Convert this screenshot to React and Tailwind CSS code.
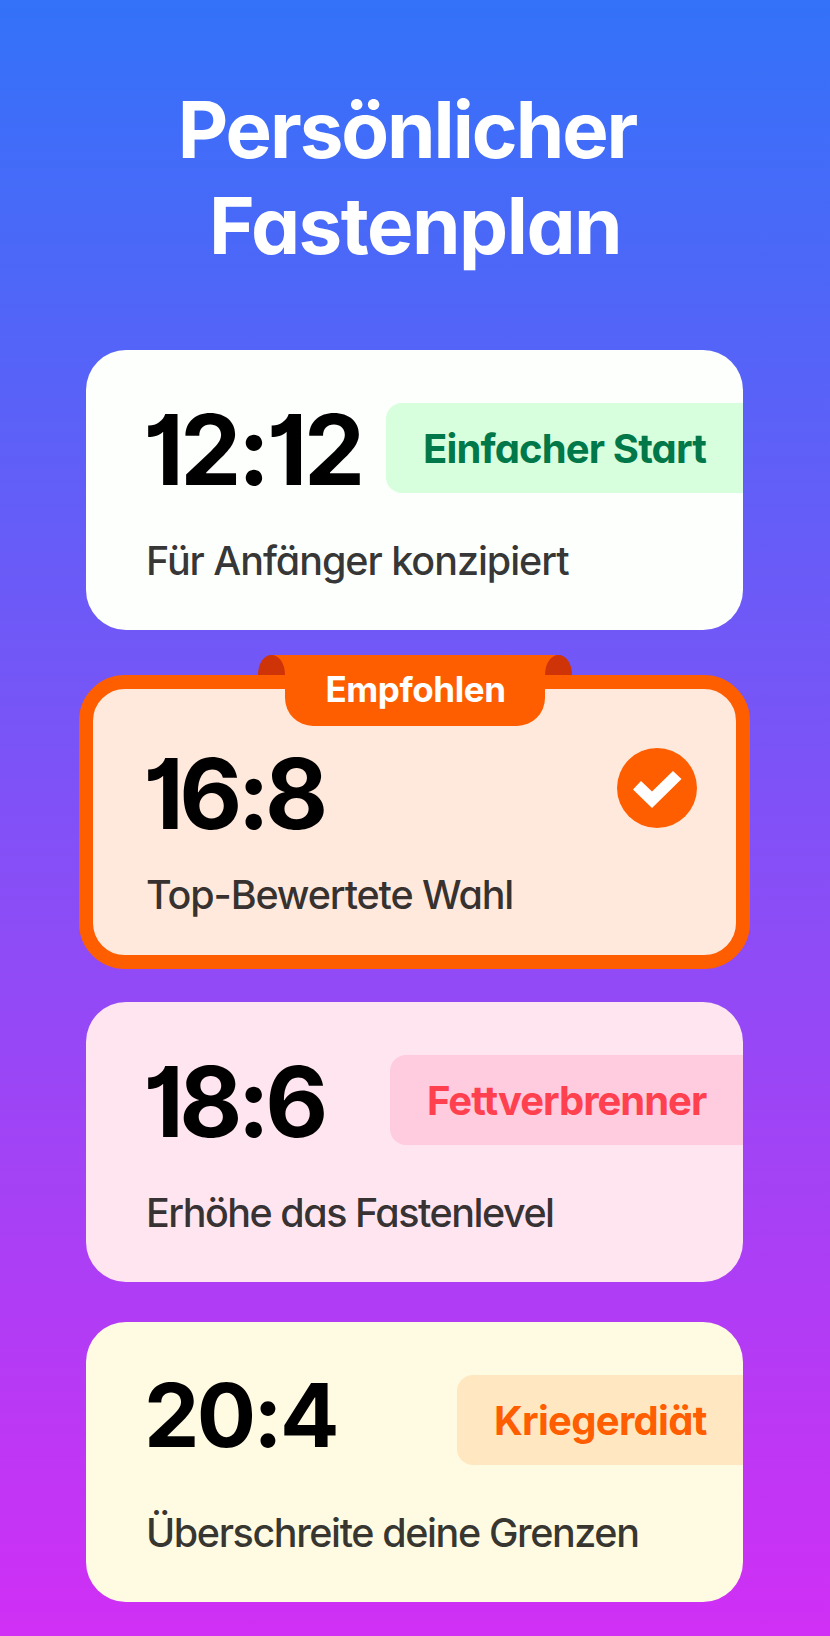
const features = "[font-feature-settings:'cv01','cv11','calt'_0]";

function Badge({ children, className }) {
  return (
    <span className={`mt-[3px] flex h-[90px] shrink-0 items-center rounded-l-2xl pt-[2px] pl-[37px] text-[40px] leading-[88px] font-bold ${className}`}>
      {children}
    </span>
  );
}

function PlanCard({ hours, hoursClass, description, descriptionClass, badge, badgeClass, className }) {
  return (
    <article className={`h-[280px] overflow-hidden rounded-[40px] pt-[50px] pl-[60px] ${className}`}>
      <div className="flex h-[100px] items-start justify-between">
        <span className={`font-bold text-black ${hoursClass}`}>{hours}</span>
        <Badge className={badgeClass}>{badge}</Badge>
      </div>
      <p className={`mt-[36px] text-[39.5px] leading-[50px] font-medium text-black/80 ${descriptionClass}`}>{description}</p>
    </article>
  );
}

function Ribbon() {
  return (
    <div className="absolute top-[-34px] left-1/2 flex -translate-x-1/2 items-start">
      <svg className="-mr-px h-[20px] w-[28px]" viewBox="0 0 28 20">
        <path d="M13.5 0H28V20H13.5Z" fill="#ff5e00" />
        <path d="M0 20C0 8 6 0 13.5 0S27 8 27 20Z" fill="#cf3308" />
      </svg>
      <span className="h-[71px] w-[260px] rounded-b-[28px] bg-[#ff5e00] pl-[2px] text-center text-[35px] leading-[69px] font-bold tracking-[-0.4px] text-white">
        Empfohlen
      </span>
      <svg className="-ml-px h-[20px] w-[28px]" viewBox="0 0 28 20">
        <path d="M0 0H14.5V20H0Z" fill="#ff5e00" />
        <path d="M1 20C1 8 7 0 14.5 0S28 8 28 20Z" fill="#cf3308" />
      </svg>
    </div>
  );
}

function SelectedCard() {
  return (
    <article className="relative -mx-[7px] mt-[45px] mb-[33px] h-[294px] rounded-[46px] border-[14px] border-[#ff5e00] bg-[#ffe9dc] pt-[55px] pr-[39px] pl-[53px]">
      <Ribbon />
      <div className="flex h-[100px] items-start justify-between">
        <span className="-ml-[3px] text-[97px] leading-[100px] font-bold tracking-[-4.750px] text-black">16:8</span>
        <svg className="mt-[4px] size-[80px]" viewBox="0 0 80 80">
          <circle cx="40" cy="40" r="40" fill="#ff5e00" />
          <path d="M16 41.5L24 33L35 43.5L56 23L64.500 31L35 60Z" fill="#fff" />
        </svg>
      </div>
      <p className="mt-[26px] text-[39.5px] leading-[50px] font-medium tracking-[-1.15px] text-black/80">Top-Bewertete Wahl</p>
    </article>
  );
}

export default function App() {
  return (
    <main className={`h-[1636px] w-full bg-linear-to-b/srgb from-[#3372f9] to-[#d02ff4] pt-[82px] pr-[87px] pl-[86px] font-[Inter,sans-serif] whitespace-nowrap ${features}`}>
      <h1 className="h-[268px] text-center text-[78px] leading-[96px] font-bold text-white">
        <span className="block pr-[15px] tracking-[-2.050px]">Persönlicher</span>
        <span className="block pl-[1px] tracking-[-1.500px]">Fastenplan</span>
      </h1>
      <PlanCard
        hours="12:12"
        hoursClass="-ml-[3px] text-[97px] leading-[100px] tracking-[-3.600px]"
        description="Für Anfänger konzipiert"
        descriptionClass="tracking-[-1.05px]"
        badge="Einfacher Start"
        badgeClass="w-[357px] bg-[#d7ffdd] text-[#00784a] tracking-[-0.85px]"
        className="bg-[#fcfffc]"
      />
      <SelectedCard />
      <PlanCard
        hours="18:6"
        hoursClass="-ml-[3px] text-[97px] leading-[100px] tracking-[-4.750px]"
        description="Erhöhe das Fastenlevel"
        descriptionClass="tracking-[-1.500px]"
        badge="Fettverbrenner"
        badgeClass="w-[353px] bg-[#ffcbdf] text-[#ff404f] tracking-[-1px]"
        className="bg-[#ffe5ef]"
      />
      <PlanCard
        hours="20:4"
        hoursClass="-ml-[2px] text-[88px] leading-[86px] tracking-[-2.750px]"
        description="Überschreite deine Grenzen"
        descriptionClass="tracking-[-1.400px]"
        badge="Kriegerdiät"
        badgeClass="w-[286px] bg-[#ffe8c1] text-[#ff5e00] tracking-[-0.700px]"
        className="mt-[40px] bg-[#fffae2]"
      />
    </main>
  );
}
